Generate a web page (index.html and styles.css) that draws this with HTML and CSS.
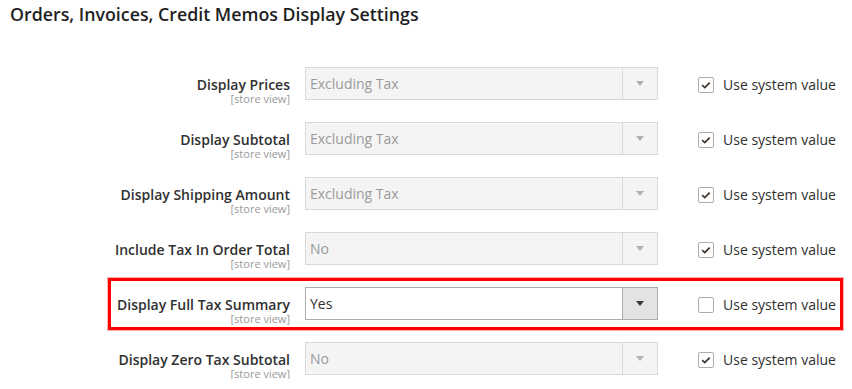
FILE: index.html
```html
<!DOCTYPE html>
<html lang="en">
  <head>
    <meta charset="UTF-8" />
    <title>Tax Display Settings</title>
    <link rel="stylesheet" href="styles.css">
  </head>
  <body>
    <h2 class="section-title">Orders, Invoices, Credit Memos Display Settings</h2>

    <div class="fields">
      <div class="field">
        <div class="field-label">
          <span class="label-text">Display Prices</span>
          <span class="scope">[store view]</span>
        </div>
        <div class="select is-disabled">
          <span class="select-value">Excluding Tax</span>
          <span class="select-arrow"></span>
        </div>
        <label class="use-default">
          <span class="check is-checked"><svg viewBox="0 0 16 16"><path d="M3.6 8.2 L6.6 11 L12.2 5.2" /></svg></span>
          Use system value
        </label>
      </div>

      <div class="field">
        <div class="field-label">
          <span class="label-text">Display Subtotal</span>
          <span class="scope">[store view]</span>
        </div>
        <div class="select is-disabled">
          <span class="select-value">Excluding Tax</span>
          <span class="select-arrow"></span>
        </div>
        <label class="use-default">
          <span class="check is-checked"><svg viewBox="0 0 16 16"><path d="M3.6 8.2 L6.6 11 L12.2 5.2" /></svg></span>
          Use system value
        </label>
      </div>

      <div class="field">
        <div class="field-label">
          <span class="label-text">Display Shipping Amount</span>
          <span class="scope">[store view]</span>
        </div>
        <div class="select is-disabled">
          <span class="select-value">Excluding Tax</span>
          <span class="select-arrow"></span>
        </div>
        <label class="use-default">
          <span class="check is-checked"><svg viewBox="0 0 16 16"><path d="M3.6 8.2 L6.6 11 L12.2 5.2" /></svg></span>
          Use system value
        </label>
      </div>

      <div class="field">
        <div class="field-label">
          <span class="label-text">Include Tax In Order Total</span>
          <span class="scope">[store view]</span>
        </div>
        <div class="select is-disabled">
          <span class="select-value">No</span>
          <span class="select-arrow"></span>
        </div>
        <label class="use-default">
          <span class="check is-checked"><svg viewBox="0 0 16 16"><path d="M3.6 8.2 L6.6 11 L12.2 5.2" /></svg></span>
          Use system value
        </label>
      </div>

      <!-- the one we changed -->
      <div class="field is-highlighted">
        <div class="field-label">
          <span class="label-text">Display Full Tax Summary</span>
          <span class="scope">[store view]</span>
        </div>
        <div class="select">
          <span class="select-value">Yes</span>
          <span class="select-arrow"></span>
        </div>
        <label class="use-default">
          <span class="check"></span>
          Use system value
        </label>
      </div>

      <div class="field">
        <div class="field-label">
          <span class="label-text">Display Zero Tax Subtotal</span>
          <span class="scope">[store view]</span>
        </div>
        <div class="select is-disabled">
          <span class="select-value">No</span>
          <span class="select-arrow"></span>
        </div>
        <label class="use-default">
          <span class="check is-checked"><svg viewBox="0 0 16 16"><path d="M3.6 8.2 L6.6 11 L12.2 5.2" /></svg></span>
          Use system value
        </label>
      </div>
    </div>
  </body>
</html>
```

FILE: styles.css
```css
body {
  font-family: "Open Sans", "DejaVu Sans", sans-serif;
  background: #ffffff;
  color: #303030;
  margin: 0;
  padding: 0;
}

.section-title {
  margin: 0;
  padding: 3px 10px 0;
  font-size: 17.8px;
  line-height: 22px;
  font-weight: 600;
  color: #1f1f1f;
}

.fields {
  margin-top: 42px;
  display: flex;
  flex-direction: column;
  gap: 18px;
}

.field {
  display: grid;
  grid-template-columns: 290px 353px 1fr;
  column-gap: 15px;
  align-items: start;
}

/* red annotation box */
.field.is-highlighted {
  position: relative;
}

.field.is-highlighted::after {
  content: "";
  position: absolute;
  top: -9px;
  bottom: -6px;
  left: 108px;
  right: 9px;
  border: 3px solid #ff0000;
  box-shadow: 0 0 0 1px rgba(255, 0, 0, 0.3);
  pointer-events: none;
}

.field-label {
  display: flex;
  flex-direction: column;
  align-items: flex-end;
  text-align: right;
  padding-top: 9px;
}

.label-text {
  font-size: 14px;
  line-height: 17px;
  font-weight: 600;
  color: #303030;
}

.scope {
  font-size: 11px;
  line-height: 10px;
  margin-top: 1px;
  color: #999999;
}

.select {
  display: flex;
  height: 33px;
  box-sizing: border-box;
  border: 1px solid #adadad;
  background: #ffffff;
  font-size: 14px;
}

.select-value {
  flex: 1;
  padding-left: 4px;
  line-height: 31px;
  color: #303030;
}

.select-arrow {
  width: 34px;
  border-left: 1px solid #adadad;
  background: #e3e3e3;
  display: flex;
  align-items: center;
  justify-content: center;
}

.select-arrow::before {
  content: "";
  border-left: 4px solid transparent;
  border-right: 4px solid transparent;
  border-top: 5px solid #41362f;
}

.select.is-disabled {
  background: #f4f4f4;
  border-color: #d9d9d9;
}

.select.is-disabled .select-value {
  color: #9a9a9a;
}

.select.is-disabled .select-arrow {
  background: #f4f4f4;
  border-left-color: #d9d9d9;
}

.select.is-disabled .select-arrow::before {
  border-top-color: #b0b0b0;
}

.use-default {
  display: flex;
  align-items: center;
  gap: 9px;
  padding-left: 25px;
  margin-top: 8px;
  font-size: 14px;
  line-height: 19px;
  color: #303030;
}

.check {
  width: 16px;
  height: 16px;
  box-sizing: border-box;
  border: 1px solid #adadad;
  border-radius: 2px;
  background: #ffffff;
  display: flex;
}

.check svg {
  width: 14px;
  height: 14px;
}

.check svg path {
  fill: none;
  stroke: #41362f;
  stroke-width: 2;
}
```
